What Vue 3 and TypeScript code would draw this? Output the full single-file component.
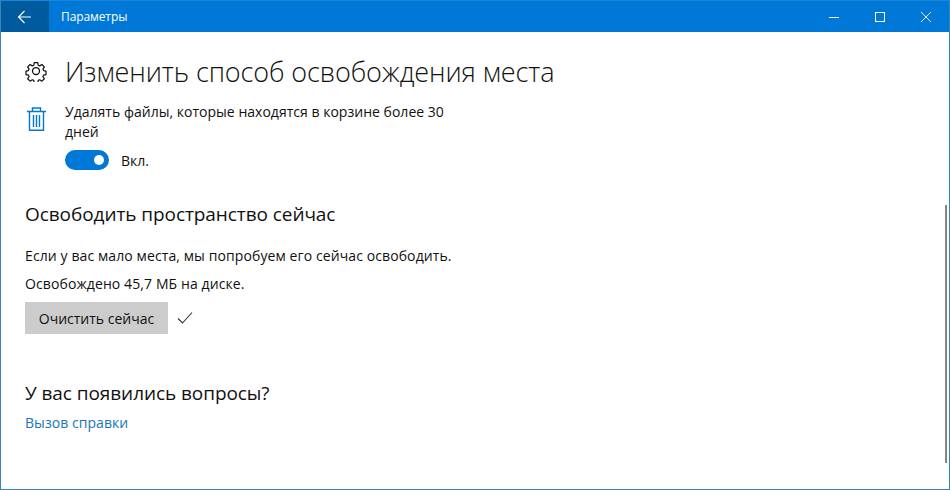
<template>
  <div class="window">
    <header class="titlebar">
      <button class="back" title="Назад">
        <svg width="16" height="16" viewBox="0 0 16 16" fill="none" stroke="#fff" stroke-width="1.1">
          <path d="M1.5 8H14M7.5 2L1.5 8l6 6" />
        </svg>
      </button>
      <span class="app-title">Параметры</span>
      <div class="controls">
        <span class="ctl"><svg width="12" height="12" viewBox="0 0 12 12" stroke="#fff" fill="none"><path d="M1 6.5h10" /></svg></span>
        <span class="ctl"><svg width="12" height="12" viewBox="0 0 12 12" stroke="#fff" fill="none"><rect x="1.5" y="1.5" width="9" height="9" /></svg></span>
        <span class="ctl"><svg width="12" height="12" viewBox="0 0 12 12" stroke="#fff" fill="none" stroke-width="0.9"><path d="M1 1l10 10M11 1L1 11" /></svg></span>
      </div>
    </header>

    <main class="content">
      <div class="page-head">
        <svg class="gear" width="22" height="22" viewBox="0 0 24 24" fill="none" stroke="#111" stroke-width="1.4" stroke-linejoin="round">
          <path d="M10 2.5h4l.6 2.9 1.7.7 2.5-1.6 2.8 2.8-1.6 2.5.7 1.7 2.8.6v4l-2.8.6-.7 1.7 1.6 2.5-2.8 2.8-2.5-1.6-1.7.7-.6 2.7h-4l-.6-2.7-1.7-.7-2.5 1.6-2.8-2.8 1.6-2.5-.7-1.7-2.8-.6v-4l2.8-.6.7-1.7-1.6-2.5 2.8-2.8 2.5 1.6 1.7-.7z" transform="translate(0.6 0.6) scale(0.95)" />
          <circle cx="12" cy="12" r="3.8" />
        </svg>
        <h1>Изменить способ освобождения места</h1>
      </div>

      <div class="option">
        <svg class="trash" width="22" height="26" viewBox="0 0 22 26" fill="none" stroke="#0078d7" stroke-width="1.4">
          <path d="M1 5.5h19M6.5 5.5V2h8v3.5M3.5 5.5v18.8h14V5.5M7.5 9v12M10.5 9v12M13.5 9v12" />
        </svg>
        <div class="option-body">
          <p class="option-text">Удалять файлы, которые находятся в корзине более 30 дней</p>
          <div class="toggle-row">
            <span class="toggle"><span class="knob"></span></span>
            <span>Вкл.</span>
          </div>
        </div>
      </div>

      <h2 class="free-title">Освободить пространство сейчас</h2>
      <p class="line first">Если у вас мало места, мы попробуем его сейчас освободить.</p>
      <p class="line">Освобождено 45,7 МБ на диске.</p>
      <div class="action">
        <button class="clean">Очистить сейчас</button>
        <svg width="16" height="14" viewBox="0 0 16 14" fill="none" stroke="#333" stroke-width="1.1"><path d="M1 7.5l4.5 4.5L15 1.5" /></svg>
      </div>

      <h2 class="help-title">У вас появились вопросы?</h2>
      <a class="help-link">Вызов справки</a>
    </main>

    <div class="scrollbar"></div>
  </div>
</template>

<script setup lang="ts">
</script>

<style>
html, body {
  margin: 0;
  background: #fff;
}
</style>

<style scoped>
.window {
  position: relative;
  box-sizing: border-box;
  width: 950px;
  height: 490px;
  display: flex;
  flex-direction: column;
  border: 1px solid #3a87b5;
  border-top-color: #1a86d9;
  background: #fff;
  color: #111;
  font-family: "Open Sans", "Noto Sans", sans-serif;
  font-size: 14px;
  overflow: hidden;
}

.titlebar {
  height: 31px;
  flex: none;
  display: flex;
  align-items: center;
  background: #0078d7;
  color: #fff;
}

.back {
  width: 48px;
  height: 100%;
  padding: 0;
  display: flex;
  align-items: center;
  justify-content: center;
  border: none;
  background: #005a9e;
}

.app-title {
  margin-left: 12px;
  font-size: 12px;
  letter-spacing: -0.1px;
}

.controls {
  margin-left: auto;
  display: flex;
}

.ctl {
  width: 46px;
  height: 31px;
  display: flex;
  align-items: center;
  justify-content: center;
}

.content {
  flex: 1;
  padding: 0 0 0 24px;
}

.page-head {
  margin-top: 19px;
  height: 40px;
  display: flex;
  align-items: center;
}

.gear {
  flex: none;
  margin-right: 18px;
}

h1 {
  margin: 0;
  font-size: 27px;
  font-weight: 300;
  letter-spacing: -0.1px;
  white-space: nowrap;
}

.option {
  margin-top: 11px;
  display: flex;
}

.trash {
  flex: none;
  margin: 4px 17px 0 1px;
}

.option-text {
  width: 400px;
  margin: 0;
  line-height: 20px;
  letter-spacing: 0.02px;
}

.toggle-row {
  margin-top: 8px;
  display: flex;
  align-items: center;
  gap: 12px;
}

.toggle {
  width: 44px;
  height: 20px;
  box-sizing: border-box;
  padding-right: 5px;
  display: flex;
  align-items: center;
  justify-content: flex-end;
  border-radius: 10px;
  background: #0078d7;
}

.knob {
  width: 10px;
  height: 10px;
  border-radius: 50%;
  background: #fff;
}

h2 {
  margin: 0;
  font-size: 19px;
  font-weight: 400;
  line-height: 26px;
  letter-spacing: -0.07px;
}

.free-title {
  margin-top: 31px;
}

.line {
  margin: 0;
  line-height: 20px;
  letter-spacing: 0.1px;
}

.line.first {
  margin-top: 19px;
}

.line + .line {
  margin-top: 8px;
}

.action {
  margin-top: 8px;
  display: flex;
  align-items: center;
  gap: 9px;
}

.clean {
  width: 143px;
  height: 32px;
  padding: 0;
  border: none;
  background: #cccccc;
  color: #111;
  font: inherit;
}

.help-title {
  margin-top: 46px;
}

.help-link {
  display: block;
  margin-top: 7px;
  line-height: 20px;
  color: #1a76b6;
  letter-spacing: 0.05px;
}

/* тонкий скролл поверх контента */
.scrollbar {
  position: absolute;
  top: 204px;
  right: 2px;
  width: 2px;
  height: 258px;
  background: #858585;
}
</style>
